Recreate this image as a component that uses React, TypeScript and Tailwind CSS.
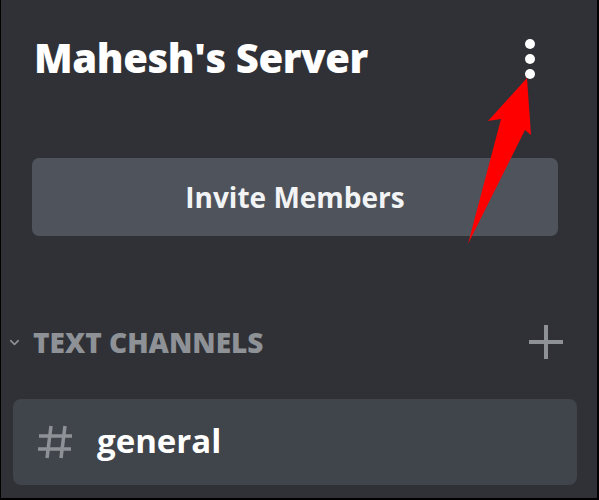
import { ChevronDown } from "lucide-react";

export default function App() {
  return (
    <div
      className="relative w-[599px] h-[500px] overflow-hidden bg-[#2f3136] border-l border-r-2 border-b-2 border-black flex flex-col"
      style={{ fontFamily: '"Open Sans", "Noto Sans", sans-serif' }}
    >
      {/* Header */}
      <div className="flex items-center justify-between pl-[33px] pr-[62px] pt-[36px]">
        <h1 className="text-[40px] font-extrabold text-white tracking-[-0.4px] leading-none">
          Mahesh's Server
        </h1>
        <div className="flex flex-col items-center gap-[5px] mt-[3px]">
          <span className="w-[10px] h-[10px] rounded-full bg-white" />
          <span className="w-[10px] h-[10px] rounded-full bg-white" />
          <span className="w-[10px] h-[10px] rounded-full bg-white" />
        </div>
      </div>

      {/* Invite button */}
      <div className="px-[31px] mt-[79px]">
        <button className="w-[526px] h-[78px] rounded-[7px] bg-[#4f545c] text-[#f2f3f5] text-[28px] font-bold flex items-center justify-center">
          Invite Members
        </button>
      </div>

      {/* Category */}
      <div className="flex items-center justify-between pl-[6px] pr-[33px] mt-[88px]">
        <div className="flex items-center gap-[11px]">
          <ChevronDown className="w-[15px] h-[15px] text-[#8e9297]" strokeWidth={2.5} />
          <span className="text-[28px] font-extrabold text-[#8e9297] leading-none">
            TEXT CHANNELS
          </span>
        </div>
        <svg width="36" height="36" viewBox="0 0 36 36">
          <path d="M18 1v34M1 18h34" stroke="#8e9297" strokeWidth="4" />
        </svg>
      </div>

      {/* Channel */}
      <div className="pl-[12px] pr-[20px] mt-[39px]">
        <div className="h-[86px] rounded-[8px] bg-[#40444b] flex items-center pl-[22px] gap-[22px]">
          <svg width="40" height="40" viewBox="0 0 40 40">
            <path
              d="M16 4L12 36M30 4L26 36M4 14H37M3 27H36"
              stroke="#8e9297"
              strokeWidth="3.5"
              fill="none"
            />
          </svg>
          <span className="text-[33px] font-bold text-white leading-none -mt-[4px]">
            general
          </span>
        </div>
      </div>

      {/* Red arrow annotation */}
      <svg
        className="absolute left-0 top-0 pointer-events-none"
        width="599"
        height="500"
        viewBox="0 0 599 500"
      >
        <path
          d="M526 78 L530 135 L524 130 L467 244 L500 119 L487 121 Z"
          fill="#ff0000"
        />
      </svg>
    </div>
  );
}
